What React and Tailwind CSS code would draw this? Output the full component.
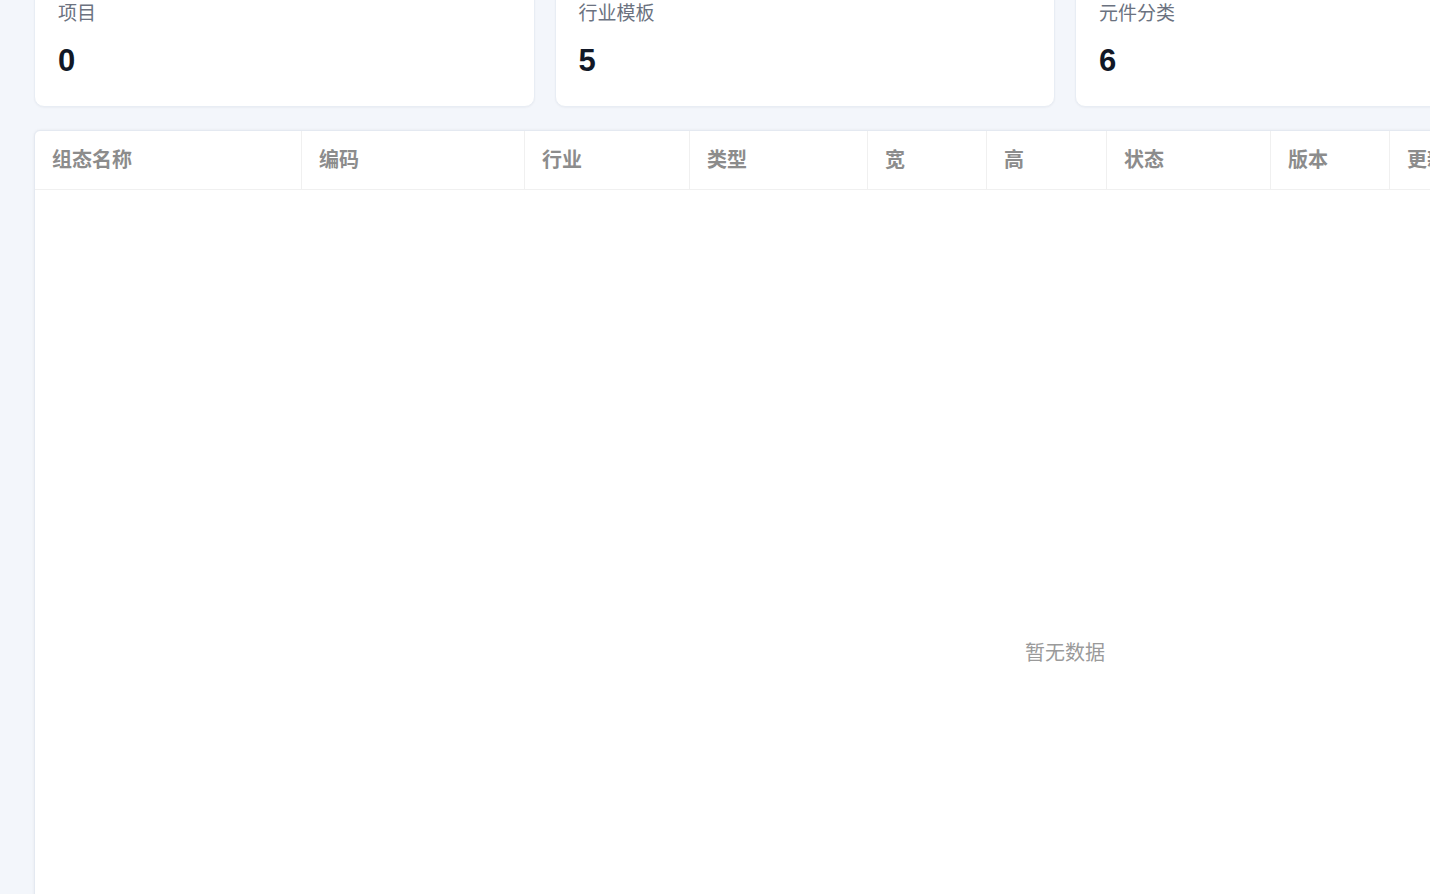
const stats = [
  { label: '项目', value: 0 },
  { label: '行业模板', value: 5 },
  { label: '元件分类', value: 6 },
  { label: '组态数量', value: 0 },
]

const columns = [
  { title: '组态名称', width: 'w-[267px]' },
  { title: '编码', width: 'w-[223px]' },
  { title: '行业', width: 'w-[165px]' },
  { title: '类型', width: 'w-[178px]' },
  { title: '宽', width: 'w-[119px]' },
  { title: '高', width: 'w-[120px]' },
  { title: '状态', width: 'w-[164px]' },
  { title: '版本', width: 'w-[119px]' },
  { title: '更新时间', width: 'w-[220px]' },
  { title: '操作', width: 'flex-1' },
]

export default function App() {
  return (
    <div
      className="h-screen w-full overflow-hidden bg-[#f3f6fb]"
      style={{ fontFamily: "'Liberation Sans', 'Noto Sans CJK SC', sans-serif" }}
    >
      <div className="-mt-[21px] w-[2096px] pl-[34px]">
        {/* stat cards */}
        <div className="grid grid-cols-4 gap-[20px]">
          {stats.map((s) => (
            <div
              key={s.label}
              className="rounded-[10px] border border-[#e8edf4] bg-white px-[23px] pt-[21px] pb-[27px] shadow-[0_1px_2px_rgba(15,23,42,0.04)]"
            >
              <div className="text-[19px] leading-[26px] text-[#6b7280]">{s.label}</div>
              <div className="mt-[16px] text-[31px] font-bold leading-[36px] text-[#111827]">{s.value}</div>
            </div>
          ))}
        </div>

        {/* table */}
        <div className="mt-[23px] rounded-t-[6px] border border-[#e4e9f1] bg-white shadow-[0_0_3px_rgba(15,23,42,0.06)]">
          <div className="flex h-[59px] border-b border-[#f0f0f0]">
            {columns.map((c, i) => (
              <div
                key={c.title}
                className={`${c.width} flex shrink-0 items-center pl-[17px] text-[20px] font-bold text-[#8c8c8c] ${
                  i < columns.length - 1 ? 'border-r border-[#f0f0f0]' : ''
                }`}
              >
                {c.title}
              </div>
            ))}
          </div>
          <div className="flex h-[926px] items-center justify-center">
            <span className="text-[20px] text-[#9a9a9a]">暂无数据</span>
          </div>
        </div>
      </div>
    </div>
  )
}
